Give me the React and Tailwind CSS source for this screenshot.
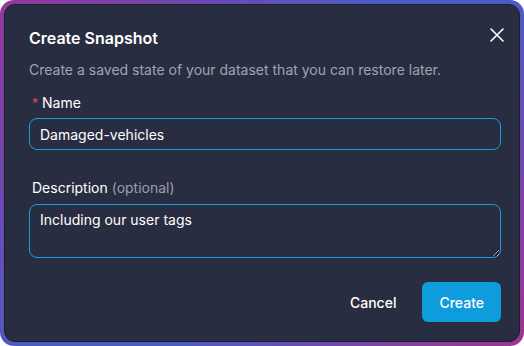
import React from 'react';

export default function App() {
    return (
        <div className="w-[524px] h-[346px] bg-white" style={{ fontFamily: 'Inter, "Noto Sans", sans-serif' }}>
            <div className="w-full h-full rounded-[14px] p-[4px] bg-[linear-gradient(135deg,#93379b_0%,#4a5cc4_45%,#4a5cc4_60%,#a1338f_100%)]">
                <div className="relative w-full h-full rounded-[11px] bg-[#292d41] border border-[#1b1e2c] pl-[24px] pr-[18px] pt-[21px] flex flex-col">
                    {/* Close */}
                    <button className="absolute top-[23px] right-[15px] text-white p-0">
                        <svg width="14" height="14" viewBox="0 0 14 14" fill="none" stroke="currentColor" strokeWidth="1.6" strokeLinecap="round">
                            <path d="M1 1L13 13M13 1L1 13" />
                        </svg>
                    </button>

                    <h2 className="text-[16px] leading-[24px] font-semibold text-white">Create Snapshot</h2>
                    <p className="mt-[10px] text-[14px] leading-[20px] text-[#a0a4b3]">
                        Create a saved state of your dataset that you can restore later.
                    </p>

                    {/* Name */}
                    <label className="mt-[13px] px-[3px] text-[14px] leading-[20px] text-white flex items-center gap-[4px]">
                        <span className="text-[#e5484d] text-[12px]">*</span>
                        Name
                    </label>
                    <input
                        readOnly
                        value="Damaged-vehicles"
                        className="mt-[5px] h-[32px] w-full rounded-[8px] border border-[#1c9ce0] bg-transparent px-[10px] text-[14px] text-white outline-none"
                    />

                    {/* Description */}
                    <label className="mt-[28px] px-[3px] text-[14px] leading-[20px] text-white">
                        Description <span className="text-[#9a9eae]">(optional)</span>
                    </label>
                    <textarea
                        readOnly
                        value="Including our user tags"
                        className="mt-[6px] h-[54px] w-full rounded-[8px] border border-[#1c9ce0] bg-transparent px-[10px] py-[5px] text-[14px] leading-[20px] text-white outline-none [color-scheme:dark]"
                    />

                    {/* Actions */}
                    <div className="mt-[24px] flex items-center justify-end gap-[26px]">
                        <button className="text-[14px] font-medium text-white">Cancel</button>
                        <button className="h-[40px] px-[17px] rounded-[6px] bg-[#0e9cdd] text-[14px] font-medium text-white">Create</button>
                    </div>
                </div>
            </div>
        </div>
    );
}
